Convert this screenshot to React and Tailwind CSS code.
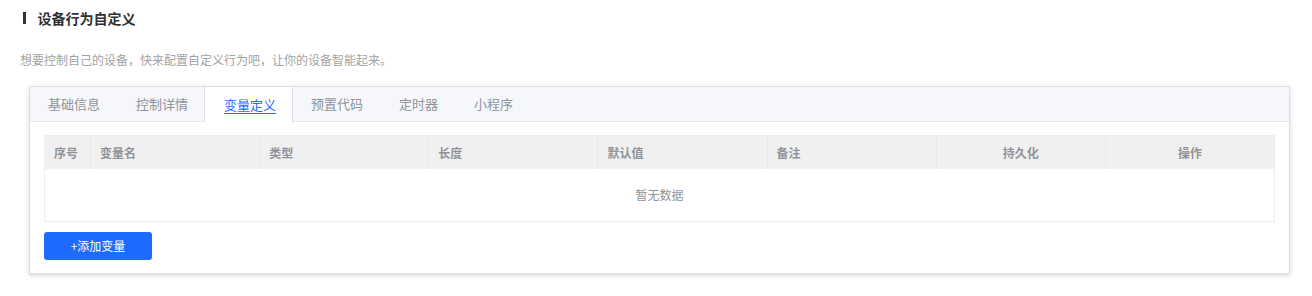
import React from "react";

const font = { fontFamily: '"Noto Sans CJK SC", "Noto Sans", sans-serif' };

const tabs = ["基础信息", "控制详情", "变量定义", "预置代码", "定时器", "小程序"];
const cols = [
  { label: "序号", w: "w-[45px]", align: "text-left" },
  { label: "变量名", w: "flex-1", align: "text-left" },
  { label: "类型", w: "flex-1", align: "text-left" },
  { label: "长度", w: "flex-1", align: "text-left" },
  { label: "默认值", w: "flex-1", align: "text-left" },
  { label: "备注", w: "flex-1", align: "text-left" },
  { label: "持久化", w: "flex-1", align: "text-center" },
  { label: "操作", w: "flex-1", align: "text-center" },
];

export default function App() {
  return (
    <div className="w-[1312px] h-[296px] bg-white pl-[20px] pt-[8px]" style={font}>
      <div className="flex items-center h-[20px]">
        <div className="ml-[3px] w-[2.5px] h-[12px] bg-[#333333]" />
        <div className="ml-[12px] text-[14px] font-bold text-[#303133] leading-[20px]">设备行为自定义</div>
      </div>
      <div className="mt-[22px] text-[12px] leading-[20px] text-[#a3a3a3]">
        想要控制自己的设备，快来配置自定义行为吧，让你的设备智能起来。
      </div>
      <div className="mt-[16px] ml-[9px] w-[1261px] border border-[#dcdfe6] bg-white shadow-[0_2px_4px_rgba(0,0,0,0.12),0_0_6px_rgba(0,0,0,0.04)]">
        <div className="flex h-[35px] bg-[#f5f7fa] border-b border-[#e4e7ed]">
          {tabs.map((t) => {
            const active = t === "变量定义";
            return (
              <div
                key={t}
                className={
                  active
                    ? "-ml-[2px] pl-[19px] pr-[16px] h-[35px] -mb-px flex items-center bg-white border-x border-[#dcdfe6] text-[13px] text-[#1f6bff] underline underline-offset-[3px]"
                    : "px-[17px] h-[34px] flex items-center border-x border-transparent text-[13px] text-[#909399]"
                }
              >
                {t}
              </div>
            );
          })}
        </div>
        <div className="px-[14px] pt-[13px] pb-[13px]">
          <div className="border border-[#ebeef5]">
            <div className="flex h-[33px] bg-[#f0f0f0]">
              {cols.map((c, i) => (
                <div
                  key={c.label}
                  className={`${c.w} ${c.align} ${i > 0 ? "border-l border-[#e8e8ef]" : ""} px-[9px] flex items-center ${c.align === "text-center" ? "justify-center" : ""} text-[12px] font-bold text-[#909399]`}
                >
                  {c.label}
                </div>
              ))}
            </div>
            <div className="h-[52px] flex items-center justify-center text-[12px] text-[#909399]">暂无数据</div>
          </div>
          <button className="mt-[10px] w-[108px] h-[28px] rounded-[3px] bg-[#1f6bff] text-white text-[12px] flex items-center justify-center">
            +添加变量
          </button>
        </div>
      </div>
    </div>
  );
}
